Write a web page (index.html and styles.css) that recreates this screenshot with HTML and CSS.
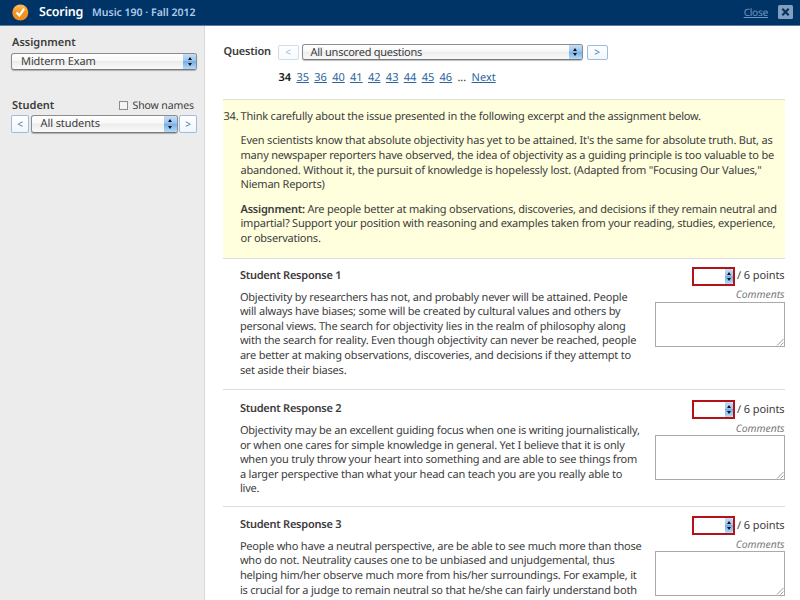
FILE: index.html
```html
<!DOCTYPE html>
<html lang="en">
<head>
<meta charset="utf-8">
<title>Scoring</title>
<link rel="stylesheet" href="styles.css">
</head>
<body>
<header class="topbar">
  <svg class="logo" width="17" height="17" viewBox="0 0 17 17"><defs><linearGradient id="orange" x1="0" y1="0" x2="0" y2="1"><stop offset="0" stop-color="#ffc05c"/><stop offset=".5" stop-color="#f59322"/><stop offset="1" stop-color="#f08a1c"/></linearGradient></defs><circle cx="8.300" cy="8.500" r="8" fill="url(#orange)"/><path d="M4.600 8.600l2.800 3 4.800-7" fill="none" stroke="#fff" stroke-width="2.200"/></svg>
  <h1 class="title">Scoring</h1>
  <span class="course">Music 190 · Fall 2012</span>
  <a class="close" href="#">Close</a>
  <svg class="close-icon" width="15" height="14" viewBox="0 0 15 14"><rect width="15" height="14" rx="1.500" fill="#819fc1"/><path d="M4.300 3.700l6.400 6.600M10.700 3.700l-6.400 6.600" stroke="#08325f" stroke-width="2.200"/></svg>
</header>
<div class="layout">
  <aside class="sidebar">
    <div class="label assignment-label">Assignment</div>
    <div class="select"><span>Midterm Exam</span><i class="arrows"></i></div>
    <div class="student-head"><span class="label">Student</span><label class="show"><i class="check"></i>Show names</label></div>
    <div class="student-row"><button class="step">&lt;</button><div class="select student"><span>All students</span><i class="arrows"></i></div><button class="step">&gt;</button></div>
  </aside>
  <main class="main">
    <div class="question-row"><span class="label">Question</span><button class="step wide off">&lt;</button><div class="select"><span>All unscored questions</span><i class="arrows"></i></div><button class="step wide">&gt;</button></div>
    <nav class="pages"><b>34</b><a href="#">35</a><a href="#">36</a><a href="#">40</a><a href="#">41</a><a href="#">42</a><a href="#">43</a><a href="#">44</a><a href="#">45</a><a href="#">46</a><span class="dots">...</span><a href="#">Next</a></nav>
    <section class="prompt">
      <span class="num">34.</span>
      <div class="prompt-text">
        <p>Think carefully about the issue presented in the following excerpt and the assignment below.</p>
        <p>Even scientists know that absolute objectivity has yet to be attained. It's the same for absolute truth. But, as<br>many newspaper reporters have observed, the idea of objectivity as a guiding principle is too valuable to be<br>abandoned. Without it, the pursuit of knowledge is hopelessly lost. (Adapted from "Focusing Our Values,"<br>Nieman Reports)</p>
        <p class="task"><b>Assignment:</b> Are people better at making observations, discoveries, and decisions if they remain neutral and<br>impartial? Support your position with reasoning and examples taken from your reading, studies, experience,<br>or observations.</p>
      </div>
    </section>
    <section class="response first">
      <div class="answer"><h2>Student Response 1</h2>
      <p>Objectivity by researchers has not, and probably never will be attained. People<br>will always have biases; some will be created by cultural values and others by<br>personal views. The search for objectivity lies in the realm of philosophy along<br>with the search for reality. Even though objectivity can never be reached, people<br>are better at making observations, discoveries, and decisions if they attempt to<br>set aside their biases.</p></div>
      <div class="score"><div class="points"><span class="box"><i class="arrows"></i></span>/ 6 points</div><div class="comments">Comments</div><div class="area"><svg width="8" height="8" viewBox="0 0 8 8"><path d="M1 7.500l6.500-6.500M4.500 7.500l3-3" stroke="#999"/></svg></div></div>
    </section>
    <section class="response second">
      <div class="answer"><h2>Student Response 2</h2>
      <p>Objectivity may be an excellent guiding focus when one is writing journalistically,<br>or when one cares for simple knowledge in general. Yet I believe that it is only<br>when you truly throw your heart into something and are able to see things from<br>a larger perspective than what your head can teach you are you really able to<br>live.</p></div>
      <div class="score"><div class="points"><span class="box"><i class="arrows"></i></span>/ 6 points</div><div class="comments">Comments</div><div class="area"><svg width="8" height="8" viewBox="0 0 8 8"><path d="M1 7.500l6.500-6.500M4.500 7.500l3-3" stroke="#999"/></svg></div></div>
    </section>
    <section class="response third">
      <div class="answer"><h2>Student Response 3</h2>
      <p>People who have a neutral perspective, are be able to see much more than those<br>who do not. Neutrality causes one to be unbiased and unjudgemental, thus<br>helping him/her observe much more from his/her surroundings. For example, it<br>is crucial for a judge to remain neutral so that he/she can fairly understand both</p></div>
      <div class="score"><div class="points"><span class="box"><i class="arrows"></i></span>/ 6 points</div><div class="comments">Comments</div><div class="area"><svg width="8" height="8" viewBox="0 0 8 8"><path d="M1 7.500l6.500-6.500M4.500 7.500l3-3" stroke="#999"/></svg></div></div>
    </section>
  </main>
</div>
</body>
</html>
```
FILE: styles.css
```css
* { box-sizing: border-box; }
body {
  margin: 0;
  height: 600px;
  overflow: hidden;
  background: #fff;
  color: #3c3c3c;
  font: 11px/14.6px "Noto Sans", "Open Sans", sans-serif;
  text-rendering: geometricPrecision;
}
h1, h2, p { margin: 0; }
b, h2, .label { font-weight: 600; }
a { color: #2b65a0; }
.topbar {
  display: flex;
  align-items: center;
  height: 26px;
  padding: 0 7px 1px 12px;
  background: #003366;
  border-bottom: 1px solid #5b7ca3;
}
.title { padding-top: 1px; margin-left: 10px; width: 53px; color: #fff; font-size: 12.5px; font-weight: 600; letter-spacing: -.2px; white-space: nowrap; }
.course { padding-top: 2px; color: #afcbec; font-size: 10.5px; font-weight: 600; }
.close { margin-left: auto; margin-right: 10px; color: #6f94bf; font-size: 10.2px; letter-spacing: -.3px; }
.layout { display: flex; height: 574px; }
.sidebar { flex: none; width: 205px; padding: 10px 7px 0 11px; background: #ececec; border-right: 1px solid #dadada; }
.assignment-label { margin-bottom: 2px; padding-left: 1px; }
.select {
  display: flex;
  align-items: center;
  flex: 1;
  height: 17px;
  padding-left: 9px;
  border: 1px solid #8c8c8c;
  border-bottom-color: #777;
  border-radius: 3px;
  background: linear-gradient(#fff 0%, #f8f8f8 45%, #ececec 50%, #fafafa 100%);
  box-shadow: 0 1px 1px rgba(0, 0, 0, .25);
}
.select span { flex: 1; padding-top: 1.6px; white-space: nowrap; letter-spacing: -.1px; }
.student { height: 18px; }
.student .arrows { height: 16px; }
.arrows {
  position: relative;
  width: 13px;
  height: 15px;
  border-radius: 0 2px 2px 0;
  background: linear-gradient(#c6def5 0%, #9bc5ee 45%, #75afe6 50%, #b3dafa 100%);
}
.arrows::before, .arrows::after {
  content: "";
  position: absolute;
  left: 50%;
  margin-left: -2px;
  border: 2px solid transparent;
}
.arrows::before { top: 1px; border-bottom: 3px solid #111; }
.arrows::after { bottom: 1px; border-top: 3px solid #111; }
.student-head { display: flex; justify-content: space-between; margin-top: 29px; padding: 0 3px 0 1px; }
.show { display: flex; align-items: center; font-size: 10.5px; letter-spacing: -.1px; }
.check { width: 9px; height: 9px; margin: 0 4px 1px 0; border: 1px solid #8d8d8d; background: #f4f4f4; }
.student-row { display: flex; gap: 1.5px; margin-top: 1.4px; align-items: center; }
.step {
  width: 18px;
  height: 18px;
  padding: 0;
  border: 1px solid #9bbcdf;
  border-radius: 2px;
  background: linear-gradient(#fff, #f1f6fb);
  color: #3f7ab5;
  font: 10px/14px "Noto Sans", sans-serif;
}
.step.wide { width: 21px; height: 15px; line-height: 12px; }
.step.off { opacity: .5; }
.main { flex: 1; min-width: 0; padding: 18px 15.5px 0 17.5px; }
.question-row { display: flex; align-items: center; height: 16px; }
.question-row .label { width: 55px; padding: 1px 0 0 1px; letter-spacing: -.2px; }
.question-row .select { flex: none; width: 281px; height: 16px; margin: 0 4px 0 3px; padding-left: 8px; }
.question-row .select span { letter-spacing: -.25px; }
.question-row .arrows { height: 14px; }
.pages { display: flex; gap: 5.3px; margin: 11px 0 13.4px 56px; }
.pages b { color: #111; }
.prompt {
  display: flex;
  height: 160px;
  padding-top: 10px;
  background: #ffffdd;
  border: solid #dedede;
  border-width: 1px 0;
  white-space: nowrap;
}
.num { width: 18px; padding-left: 1px; }
.prompt p { margin-bottom: 9.8px; }
.prompt, .answer { letter-spacing: -.2px; }
.prompt .task { letter-spacing: -.225px; }
.response {
  display: flex;
  justify-content: space-between;
  height: 117px;
  padding: 8px 0 0 17.4px;
  border-bottom: 1px solid #dedede;
  white-space: nowrap;
}
.answer { padding-top: 1.6px; }
.first { height: 131px; }
.second { padding-top: 10.4px; }
.third { padding-top: 9.5px; }
.third .answer { padding-top: 1.2px; }
.response h2 { font-size: 11px; margin-bottom: 7.5px; letter-spacing: -.25px; }
.score { width: 130px; text-align: right; }
.points { display: flex; justify-content: flex-end; align-items: center; height: 19px; gap: 2px; letter-spacing: -.1px; }
.box { display: flex; justify-content: flex-end; width: 43px; height: 19px; border: 2px solid #b51218; background: #fff; }
.box .arrows { width: 8px; height: 15px; }
.comments { padding-top: 1px; margin: 1.4px 0 -1px; color: #777; font-size: 10.3px; font-style: italic; }
.area { display: flex; justify-content: flex-end; align-items: flex-end; height: 45px; border: 1px solid #aaa; }
```
